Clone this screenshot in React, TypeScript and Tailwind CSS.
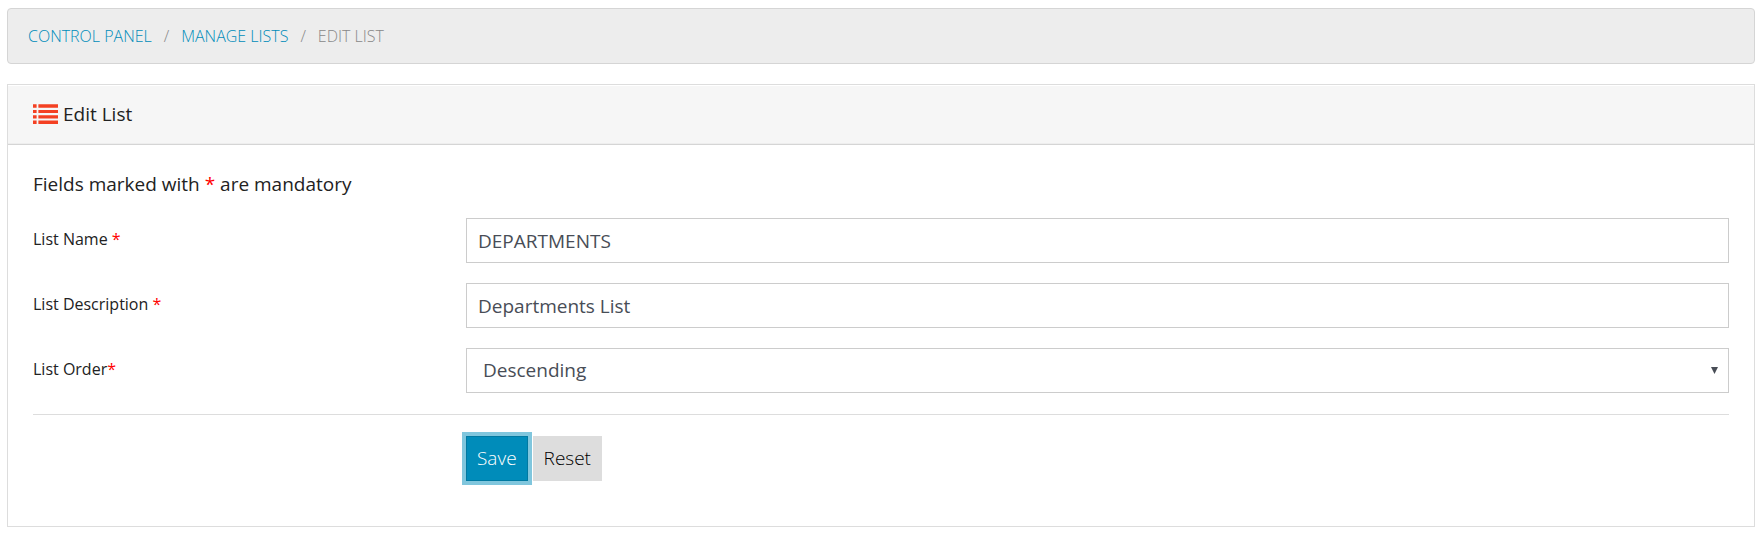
import React from 'react';

const Required = () => <span className="text-[#ff0000]">*</span>;

const ListIcon = () => (
  <svg width="25" height="20" viewBox="0 0 25 20" fill="#f44022" aria-hidden="true">
    <path d="M0 .3h3.6v3.4H0zM5.4 .3H25v3.4H5.4zM0 6h3.6v3H0zM5.4 6H25v3H5.4zM0 11.3h3.6v3.2H0zM5.4 11.3H25v3.2H5.4zM0 16.5h3.6V20H0zM5.4 16.5H25V20H5.4z" />
  </svg>
);

const row = 'grid grid-cols-[1fr_3fr] gap-x-3';
const label = 'pt-[9px] text-base leading-6 text-[#222]';
const field =
  'block h-[45px] w-full appearance-none border border-[#ccc] bg-white text-[19px] text-[#484d56] outline-none';

const App = () => {
  return (
    <div className="py-2 pr-2 pl-[7px] font-['Open_Sans',sans-serif]">
      <nav
        aria-label="Breadcrumb"
        className="flex h-14 items-center gap-3 rounded border border-[#d5d5d5] bg-[#ededed] px-5 text-base font-light uppercase text-[#888]"
      >
        <a href="#" className="text-[#008cba]">Control Panel</a>
        <span>/</span>
        <a href="#" className="text-[#008cba]">Manage Lists</a>
        <span>/</span>
        <span>Edit List</span>
      </nav>

      <section className="mt-5 border border-[#ddd] bg-white">
        <header className="flex h-[60px] items-center gap-[5px] border-b border-[#d5d5d5] bg-[#f6f6f6] px-[25px] pb-px shadow-[inset_0_1px_0_#fff,inset_0_-1px_0_#eee]">
          <ListIcon />
          <h1 className="text-[19px] leading-6 text-[#222]">Edit List</h1>
        </header>

        <form className="px-[25px] pt-[25px] pb-[45px]" onSubmit={(e) => e.preventDefault()}>
          <p className="mb-5 text-[19px] leading-7 text-[#222]">
            Fields marked with <Required /> are mandatory
          </p>

          <div className="flex flex-col gap-5">
            <div className={row}>
              <label htmlFor="list-name" className={label}>List Name <Required /></label>
              <input id="list-name" type="text" defaultValue="DEPARTMENTS" className={`${field} px-[11px]`} />
            </div>
            <div className={row}>
              <label htmlFor="list-description" className={label}>List Description <Required /></label>
              <input id="list-description" type="text" defaultValue="Departments List" className={`${field} px-[11px]`} />
            </div>
            <div className={row}>
              <label htmlFor="list-order" className={label}>List Order<Required /></label>
              <div className="relative">
                <select id="list-order" defaultValue="desc" className={`${field} px-4`}>
                  <option value="asc">Ascending</option>
                  <option value="desc">Descending</option>
                </select>
                <svg
                  className="pointer-events-none absolute top-[19px] right-[11px]"
                  width="7"
                  height="7"
                  viewBox="0 0 7 7"
                  fill="#484d56"
                  aria-hidden="true"
                >
                  <path d="M0 0h7L3.5 7z" />
                </svg>
              </div>
            </div>
          </div>

          <hr className="my-[21px] border-[#ddd]" />

          <div className={row}>
            <div className="col-start-2 flex gap-[5px]">
              <button
                type="submit"
                className="h-[45px] border border-[#0079a1] bg-[#008cba] px-2.5 text-[19px] font-light text-white ring-4 ring-[#80c6dd]"
              >
                Save
              </button>
              <button type="reset" className="h-[45px] bg-[#ddd] px-[11px] text-[19px] font-light text-black">
                Reset
              </button>
            </div>
          </div>
        </form>
      </section>
    </div>
  );
};

export default App;
